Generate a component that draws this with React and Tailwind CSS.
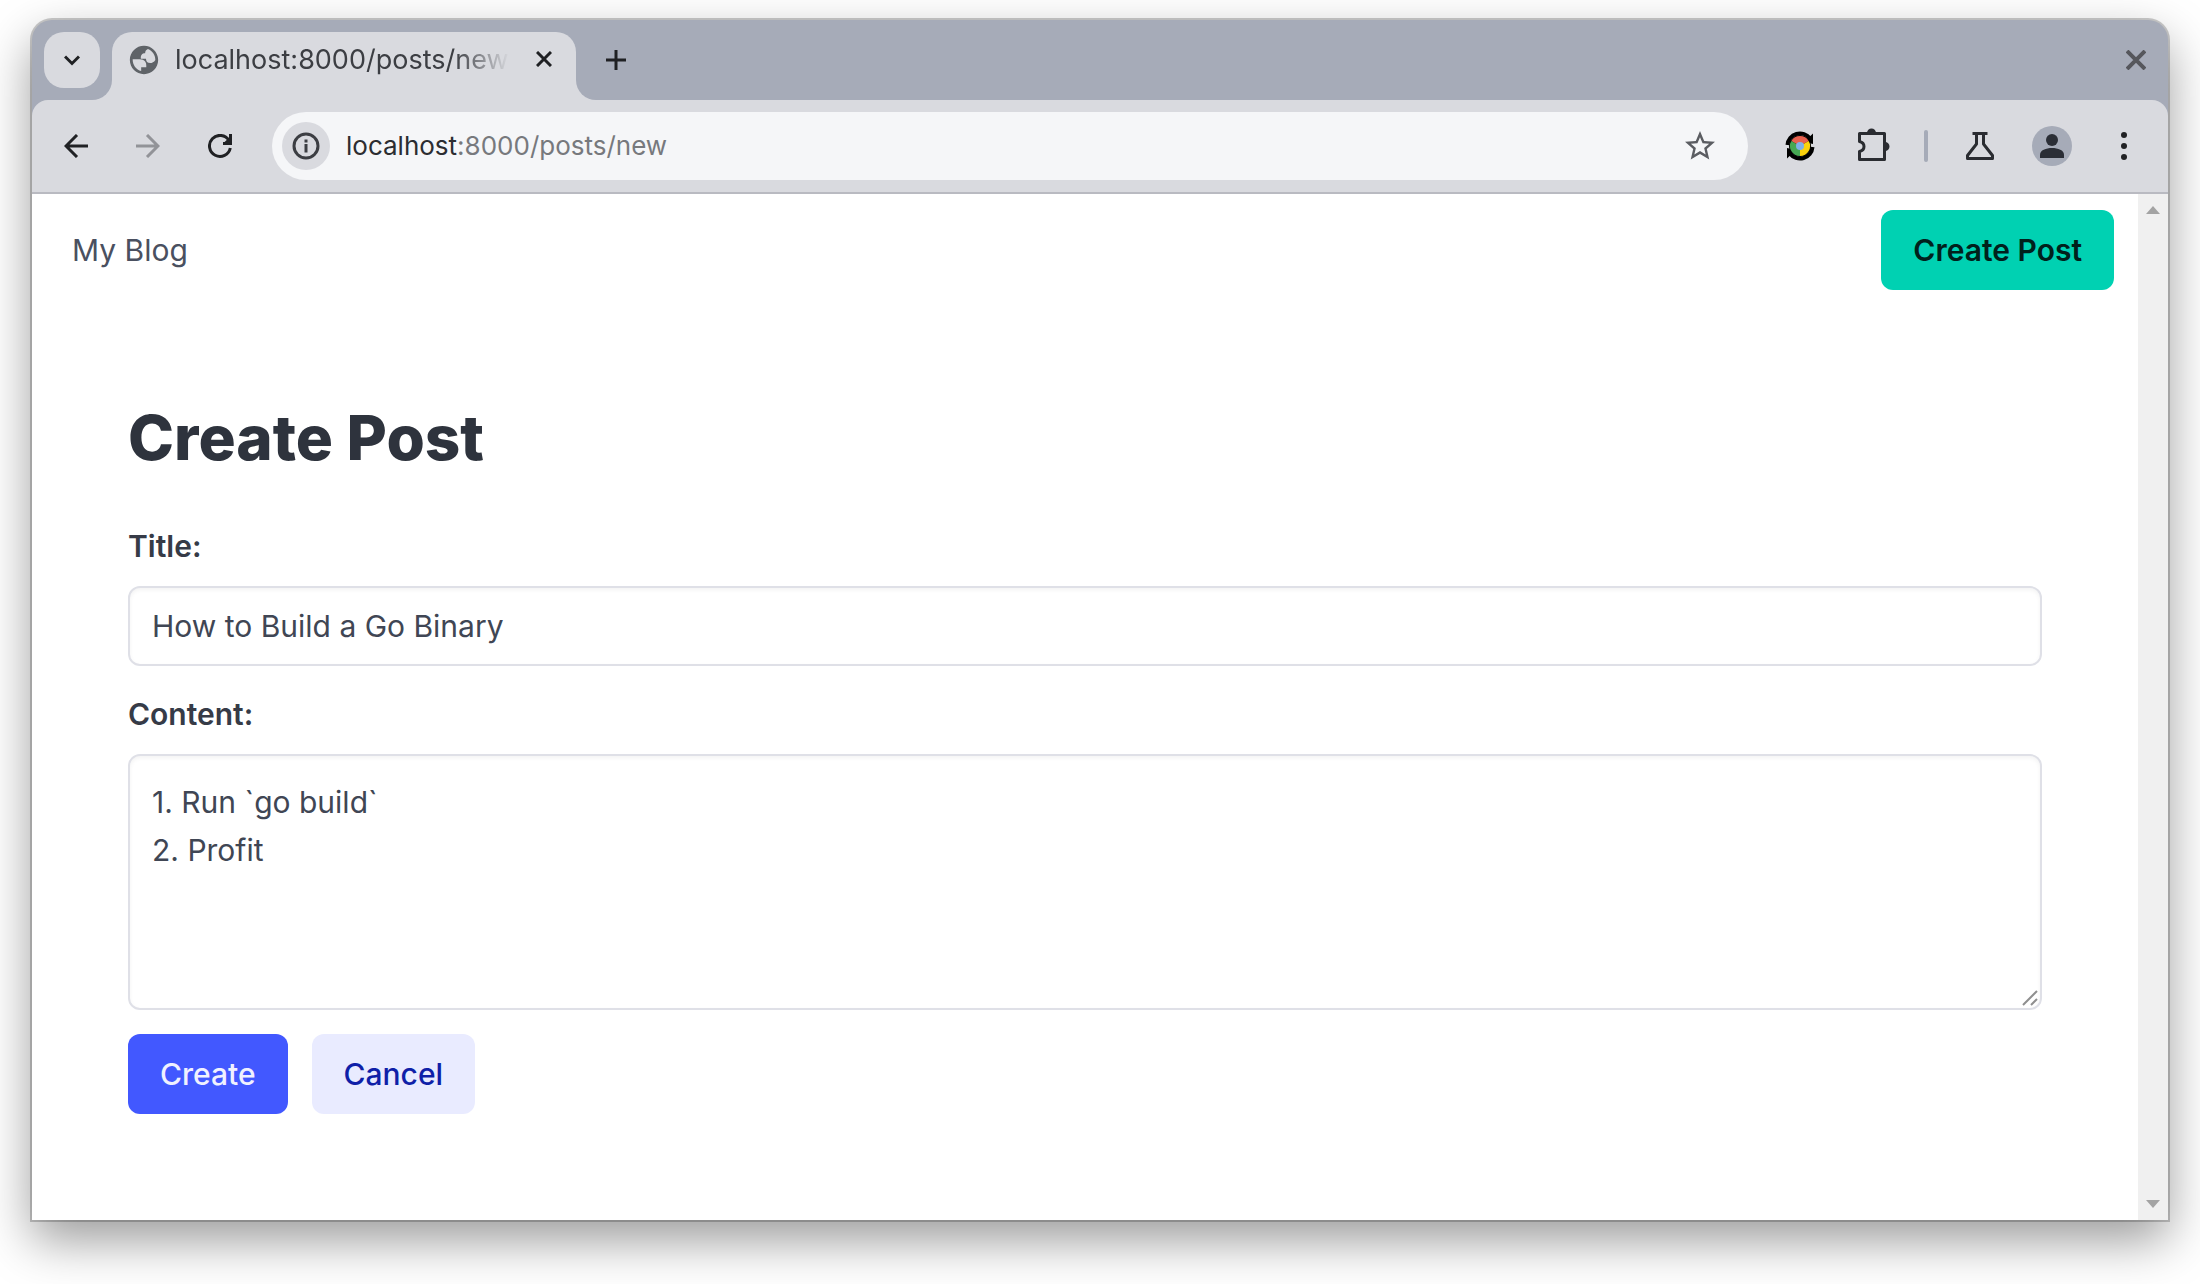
const F = '"Inter", "Liberation Sans", sans-serif'

function IconButton({ label, className = '', children }) {
  return (
    <button type="button" aria-label={label} className={`flex shrink-0 items-center justify-center ${className}`}>
      {children}
    </button>
  )
}

function Globe() {
  return (
    <svg viewBox="0 0 24 24" className="size-[34px] shrink-0" fill="#5f6368" aria-hidden="true">
      <path d="M12 2C6.500 2 2 6.500 2 12s4.500 10 10 10 10-4.500 10-10S17.500 2 12 2zM4 11.500h5c3.400 0 5 2 4.600 5.600H10v2.700c-3.500-.9-6-4-6-8.300zm16 .5c-1 1.500-2.300 2.200-3.600 2.200-2 0-3-1.100-3-3h-3.600c-.3-2.500.8-3.900 3-3.900 0-1.500.7-2.500 2-3C17.900 5.500 20 8.500 20 12z" />
    </svg>
  )
}

function ChromeIcon() {
  return (
    <svg viewBox="0 0 32 32" className="size-8" aria-hidden="true">
      <circle cx="16" cy="16" r="11" fill="#000" />
      <path d="M3.500 15A12.500 12.500 0 0 1 26 8.500" fill="none" stroke="#000" strokeWidth="4" />
      <path d="M28.500 17A12.500 12.500 0 0 1 6 23.500" fill="none" stroke="#000" strokeWidth="4" />
      <path d="M29 3.500V14L20 12zM3 28.500V18L12 20z" fill="#000" />
      <path d="M16 16L7.300 11A10 10 0 0 1 24.700 11z" fill="#e8614f" />
      <path d="M16 16L24.700 11A10 10 0 0 1 16 26z" fill="#fbd20c" />
      <path d="M16 16L16 26A10 10 0 0 1 7.300 11z" fill="#45a853" />
      <circle cx="16" cy="16" r="4" fill="#7fb0e8" />
    </svg>
  )
}

function Puzzle() {
  return (
    <svg viewBox="0 0 36 36" className="size-9" fill="none" stroke="#2a2c31" strokeWidth="3" strokeLinejoin="round" aria-hidden="true">
      <path d="M5.500 5.500h25v26h-25v-8c6-1.500 6-8.500 0-10z" />
      <path d="M13 5a4.500 4.500 0 0 1 9 0zM31 14v9a4.500 4.500 0 0 0 0-9z" fill="#2a2c31" stroke="none" />
    </svg>
  )
}

export default function App() {
  return (
    <div className="flex min-h-screen flex-col bg-white px-8 pt-5 pb-16" style={{ fontFamily: F }}>
      <div className="flex flex-1 flex-col overflow-hidden rounded-t-[20px] bg-[#a6abb8] shadow-[0_0_0_2px_rgba(0,0,0,0.2),0_20px_50px_rgba(0,0,0,0.4)]">
        <header>
          <div className="flex h-20 items-end pl-3">
            <IconButton label="Search tabs" className="mb-3 size-14 rounded-[20px] bg-[#d9dadf]">
              <svg viewBox="0 0 16 16" className="size-4" fill="none" stroke="#1f2023" strokeWidth="3" aria-hidden="true">
                <path d="M1 4.500l7 7 7-7" />
              </svg>
            </IconButton>
            <div className="relative ml-3 flex h-[68px] w-[464px] items-start rounded-t-[20px] bg-[#d9dadf] pt-[11px] pr-4 pl-[15px]">
              <span className="absolute bottom-0 -left-5 size-5 rounded-br-[20px] shadow-[8px_8px_0_8px_#d9dadf] [clip-path:inset(0)]" />
              <span className="absolute -right-5 bottom-0 size-5 rounded-bl-[20px] shadow-[-8px_8px_0_8px_#d9dadf] [clip-path:inset(0)]" />
              <Globe />
              <span className="mr-3 ml-[14px] min-w-0 flex-1 overflow-hidden text-[27px] leading-[34px] whitespace-nowrap text-[#3c3e43] [mask-image:linear-gradient(to_right,black_82%,transparent_98%)]">
                localhost:8000/posts/new
              </span>
              <IconButton label="Close tab" className="size-8">
                <svg viewBox="0 0 16 16" className="size-4" stroke="#1f2023" strokeWidth="3" aria-hidden="true">
                  <path d="M1 1l14 14M15 1L1 15" />
                </svg>
              </IconButton>
            </div>
            <IconButton label="New tab" className="mb-3 ml-3 size-14">
              <svg viewBox="0 0 20 20" className="size-5" stroke="#1f2023" strokeWidth="3" aria-hidden="true">
                <path d="M10 0v20M0 10h20" />
              </svg>
            </IconButton>
            <IconButton label="Close window" className="mr-1 mb-3 ml-auto size-14">
              <svg viewBox="0 0 20 20" className="size-5" stroke="#56575c" strokeWidth="4" aria-hidden="true">
                <path d="M1 1l18 18M19 1L1 19" />
              </svg>
            </IconButton>
          </div>

          <div className="flex h-[94px] items-center rounded-t-2xl border-b-2 border-[#b9bac1] bg-[#d9dadf] pr-5">
            <IconButton label="Back" className="ml-2 size-[72px]">
              <svg viewBox="0 0 24 24" className="size-6" fill="none" stroke="#202124" strokeWidth="3" aria-hidden="true">
                <path d="M24 12H2M13 1L2 12l11 11" />
              </svg>
            </IconButton>
            <IconButton label="Forward" className="size-[72px]">
              <svg viewBox="0 0 24 24" className="size-6" fill="none" stroke="#929398" strokeWidth="3" aria-hidden="true">
                <path d="M0 12h22M11 1l11 11-11 11" />
              </svg>
            </IconButton>
            <IconButton label="Reload" className="size-[72px]">
              <svg viewBox="0 0 24 24" className="size-6" fill="none" stroke="#202124" strokeWidth="3" aria-hidden="true">
                <path d="M22.300 14A10.500 10.500 0 1 1 21 6.500" />
                <path d="M15 9.500h7.500V0" />
                <path d="M15 9.500L24 1v9z" fill="#202124" stroke="none" />
              </svg>
            </IconButton>
            <div className="ml-4 flex h-[68px] flex-1 items-center rounded-full bg-[#f5f6f8] pr-8 pl-2.5">
              <IconButton label="View site information" className="size-12 rounded-full bg-[#d9dadf]">
                <svg viewBox="0 0 28 28" className="size-7" fill="none" stroke="#3c3e43" strokeWidth="3" aria-hidden="true">
                  <circle cx="14" cy="14" r="12" />
                  <path d="M14 12v8.500M14 7.500v3" strokeWidth="3" />
                </svg>
              </IconButton>
              <a href="#address" className="ml-4 flex-1 text-[26px] leading-9 text-[#77797d]">
                <span className="text-[#2c2d31]">localhost</span>:8000/posts/new
              </a>
              <IconButton label="Bookmark this tab" className="size-8">
                <svg viewBox="0 0 24 24" className="size-9 shrink-0" fill="#5b5d62" aria-hidden="true">
                  <path d="M22 9.240l-7.190-.62L12 2 9.190 8.630 2 9.240l5.460 4.730L5.820 21 12 17.270 18.180 21l-1.630-7.030L22 9.240zM12 15.400l-3.760 2.270 1-4.280-3.320-2.880 4.380-.38L12 6.100l1.710 4.040 4.380.38-3.320 2.880 1 4.280L12 15.400z" />
                </svg>
              </IconButton>
            </div>
            <IconButton label="Extension" className="ml-4 size-[72px]">
              <ChromeIcon />
            </IconButton>
            <IconButton label="Extensions" className="size-[72px]">
              <Puzzle />
            </IconButton>
            <span className="mx-4 h-8 w-1 rounded-full bg-[#a6abb8]" />
            <IconButton label="Labs" className="size-[72px]">
              <svg viewBox="0 0 28 28" className="size-7" fill="none" stroke="#2a2c31" strokeWidth="3" strokeLinejoin="round" aria-hidden="true">
                <path d="M6.500 1.500h15M10.500 2v10L1.500 23.500v3h25v-3L17.500 12V2" />
              </svg>
            </IconButton>
            <IconButton label="Profile" className="size-[72px]">
              <svg viewBox="0 0 40 40" className="size-10" fill="#2b2e36" aria-hidden="true">
                <circle cx="20" cy="20" r="20" fill="#a6abb8" />
                <circle cx="20" cy="14" r="6" />
                <path d="M8 32v-3c0-5 6-7 12-7s12 2 12 7v3z" />
              </svg>
            </IconButton>
            <IconButton label="Menu" className="-mr-3 size-[72px]">
              <svg viewBox="0 0 8 30" className="h-[30px] w-2" fill="#202124" aria-hidden="true">
                <circle cx="4" cy="4" r="3" />
                <circle cx="4" cy="15" r="3" />
                <circle cx="4" cy="26" r="3" />
              </svg>
            </IconButton>
          </div>
        </header>

        <div className="flex flex-1 bg-white">
          <div className="min-w-0 flex-1 text-[30px] leading-[48px] text-[#404654]">
            <nav className="flex items-center justify-between py-4 pr-6 pl-10">
              <a href="#home" className="text-[#4a5060]">My Blog</a>
              <a href="#new" className="rounded-xl bg-[#00d1b2] px-8 py-4 font-semibold text-[#00211c]">Create Post</a>
            </nav>
            <main className="px-24 pt-24">
              <h1 className="text-[62px] leading-[72px] font-extrabold text-[#2e333d]">Create Post</h1>
              <form className="mt-12" onSubmit={(e) => e.preventDefault()}>
                <label htmlFor="title" className="block font-semibold text-[#363b47]">Title:</label>
                <input
                  id="title"
                  defaultValue="How to Build a Go Binary"
                  className="mt-4 block h-20 w-full rounded-xl border-2 border-[#dfe0e7] bg-white px-[22px] shadow-[inset_0_2px_4px_rgba(10,10,10,0.05)]"
                />
                <label htmlFor="content" className="mt-6 block font-semibold text-[#363b47]">Content:</label>
                <div className="relative mt-4">
                  <textarea
                    id="content"
                    defaultValue={'1. Run `go build`\n2. Profit'}
                    className="block h-64 w-full resize-none rounded-xl border-2 border-[#dfe0e7] bg-white px-[22px] py-[22px] shadow-[inset_0_2px_4px_rgba(10,10,10,0.05)]"
                  />
                  <svg viewBox="0 0 16 16" className="absolute right-1 bottom-1 size-4" stroke="#8f8f8f" strokeWidth="2" aria-hidden="true">
                    <path d="M1 15L15 1M9 15l6-6" />
                  </svg>
                </div>
                <div className="mt-6 flex gap-6">
                  <button type="submit" className="rounded-xl bg-[#4258ff] px-8 py-4 font-medium text-[#f0f1ff]">Create</button>
                  <button type="button" className="rounded-xl bg-[#e9ebff] px-8 py-4 font-medium text-[#0f1fa8]">Cancel</button>
                </div>
              </form>
            </main>
          </div>
          <div className="flex w-[30px] flex-col items-center justify-between bg-[#f0f0f0] py-3">
            <svg viewBox="0 0 16 8" className="h-2 w-4" fill="#a3a3a3" aria-hidden="true">
              <path d="M1 8l7-8 7 8z" />
            </svg>
            <svg viewBox="0 0 16 8" className="h-2 w-4" fill="#a3a3a3" aria-hidden="true">
              <path d="M1 0l7 8 7-8z" />
            </svg>
          </div>
        </div>
      </div>
    </div>
  )
}
